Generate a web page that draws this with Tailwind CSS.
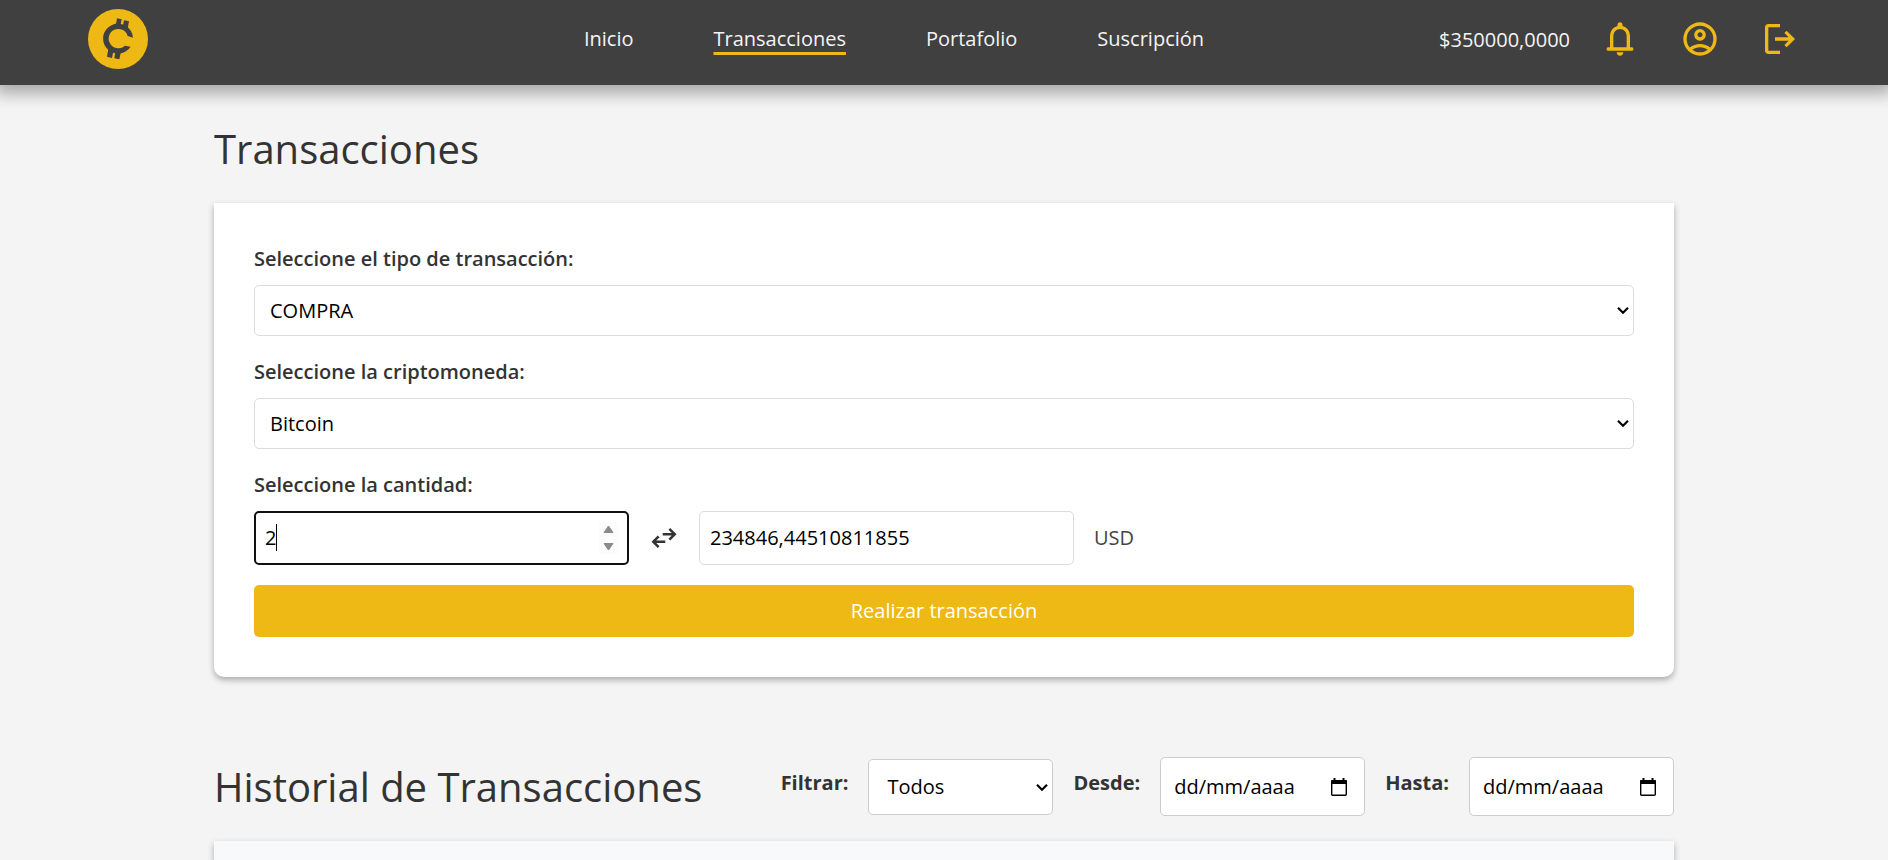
<!DOCTYPE html>
<html lang="es">
<head>
<meta charset="utf-8">
<meta name="viewport" content="width=device-width, initial-scale=1">
<title>Transacciones</title>
<script src="https://cdn.jsdelivr.net/npm/@tailwindcss/browser@4"></script>
</head>
<body class="flex min-h-screen flex-col overflow-x-hidden bg-[#f4f4f4] font-['Open_Sans',sans-serif] text-[20px] leading-[30px] text-[#333]">
<header class="relative z-10 flex items-center bg-[#404040] px-[88px] pt-[9px] pb-4 text-[#f4f4f4] shadow-[0_3px_16px_5px_rgba(0,0,0,0.33)]">
  <div class="flex flex-1">
    <a href="#" aria-label="Inicio">
      <svg class="size-[60px]" viewBox="0 0 180 180" aria-hidden="true">
        <circle cx="90" cy="90" r="90" fill="#efb915"/>
        <g fill="#404040">
          <path d="M135 86A45 45 0 1 0 128 113L111 110A29 29 0 1 1 119 81Z"/>
          <path d="M83 50L87 28L101 31L97 52ZM104 54L108 34L123 37L119 59ZM61 120L57 143L72 147L76 127ZM82 128L79 148L94 151L99 128Z"/>
        </g>
      </svg>
    </a>
  </div>
  <nav class="mr-[100px] flex gap-20 font-medium">
    <a href="#">Inicio</a>
    <a href="#" class="underline decoration-[#efb915] decoration-[3px] underline-offset-[6px]" aria-current="page">Transacciones</a>
    <a href="#">Portafolio</a>
    <a href="#">Suscripción</a>
  </nav>
  <div class="flex flex-1 items-center justify-end gap-10 text-[#efb915]">
    <span class="-mr-[10px] pt-[2px] font-medium text-[#f4f4f4]">$350000,0000</span>
    <button type="button" aria-label="Notificaciones">
      <svg class="size-10" viewBox="0 -960 960 960" fill="currentColor"><path d="M190-200q-17 0-23.500-11.500T160-240q0-17 6.500-28.500T190-280h50v-280q0-83 50-147.500T420-792v-28q0-25 17.500-42.500T480-880q25 0 42.500 17.500T540-820v28q80 20 130 84.500T720-560v280h50q17 0 23.500 11.500T800-240q0 17-6.500 28.500T770-200H190Zm290 120q-33 0-56.500-23.500T400-160h160q0 33-23.500 56.500T480-80ZM320-280h320v-280q0-66-47-113t-113-47q-66 0-113 47t-47 113v280Z"/></svg>
    </button>
    <button type="button" aria-label="Perfil">
      <svg class="size-10" viewBox="0 -960 960 960" fill="currentColor"><path d="M234-276q51-39 114-61.500T480-360q69 0 132 22.500T726-276q35-41 54.500-93T800-480q0-133-93.500-226.500T480-800q-133 0-226.500 93.500T160-480q0 59 19.500 111t54.500 93Zm246-164q-59 0-99.500-40.500T340-580q0-59 40.500-99.500T480-720q59 0 99.500 40.500T620-580q0 59-40.500 99.500T480-440Zm0 360q-83 0-156-31.500T197-197q-54-54-85.500-127T80-480q0-83 31.500-156T197-763q54-54 127-85.500T480-880q83 0 156 31.500T763-763q54 54 85.500 127T880-480q0 83-31.500 156T763-197q-54 54-127 85.500T480-80Zm0-80q53 0 100-15.500t86-44.500q-39-29-86-44.500T480-280q-53 0-100 15.500T294-220q39 29 86 44.500T480-160Zm0-360q26 0 43-17.500t17-42.500q0-25-17.500-42.500T480-640q-25 0-42.500 17.500T420-580q0 25 17.500 42.500T480-520Z"/></svg>
    </button>
    <button type="button" aria-label="Salir">
      <svg class="size-10" viewBox="0 -960 960 960" fill="currentColor"><path d="M200-120q-33 0-56.500-23.500T120-200v-560q0-33 23.500-56.500T200-840h280v80H200v560h280v80H200Zm440-160-55-58 102-102H360v-80h327L585-622l55-58 200 200-200 200Z"/></svg>
    </button>
  </div>
</header>

<main class="mx-auto flex w-full max-w-[1460px] flex-1 flex-col pt-10">
  <h1 class="mb-[30px] text-[40px] leading-[48px]">Transacciones</h1>

  <form class="flex flex-col gap-5 rounded-b-[10px] bg-white p-10 shadow-[0_3px_6px_rgba(0,0,0,0.3)]">
    <div class="flex flex-col gap-[10px]">
      <label for="tipo" class="leading-[32px] font-semibold">Seleccione el tipo de transacción:</label>
      <div class="relative">
        <select id="tipo" class="h-[51px] w-full appearance-none rounded-[5px] border border-[#dcdcdc] bg-white px-[15px] text-black"><option>COMPRA</option><option>VENTA</option></select>
        <svg class="pointer-events-none absolute top-[21px] right-[5px] h-[9px] w-3" viewBox="0 0 12 9" fill="none" stroke="#000" stroke-width="2.200" aria-hidden="true"><path d="M1 1.700L6 6.700L11 1.700"/></svg>
      </div>
    </div>
    <div class="flex flex-col gap-[10px]">
      <label for="cripto" class="leading-[32px] font-semibold">Seleccione la criptomoneda:</label>
      <div class="relative">
        <select id="cripto" class="h-[51px] w-full appearance-none rounded-[5px] border border-[#dcdcdc] bg-white px-[15px] text-black"><option>Bitcoin</option><option>Ethereum</option></select>
        <svg class="pointer-events-none absolute top-[21px] right-[5px] h-[9px] w-3" viewBox="0 0 12 9" fill="none" stroke="#000" stroke-width="2.200" aria-hidden="true"><path d="M1 1.700L6 6.700L11 1.700"/></svg>
      </div>
    </div>
    <div class="flex flex-col gap-[10px]">
      <label for="cantidad" class="leading-[32px] font-semibold">Seleccione la cantidad:</label>
      <div class="flex items-center gap-5">
        <div class="relative w-[375px]">
          <input id="cantidad" type="number" value="2" autofocus class="h-[54px] w-full appearance-none rounded-[5px] border-2 border-[#101010] bg-white px-[9px] pb-[2px] text-black caret-transparent outline-none [&::-webkit-inner-spin-button]:appearance-none">
          <span class="pointer-events-none absolute top-[13px] left-[22px] h-[27px] w-px bg-black"></span>
          <svg class="pointer-events-none absolute top-[11px] right-[11px] h-8 w-[19px] bg-[#fcfcfc]" viewBox="0 0 19 32" fill="#8b8b8b" stroke="#8b8b8b" stroke-linejoin="round" aria-hidden="true"><path d="M5 10.500L9.500 4L14 10.500ZM5 21.500H14L9.500 28Z"/></svg>
        </div>
        <svg class="size-[30px]" viewBox="0 -960 960 960" fill="#333" aria-hidden="true"><path d="M280-160 80-360l200-200 56 57-103 103h287v80H233l103 103-56 57Zm400-240-56-57 103-103H440v-80h287L624-743l56-57 200 200-200 200Z"/></svg>
        <input type="text" value="234846,44510811855" aria-label="Importe en USD" class="h-[54px] w-[375px] rounded-[5px] border border-[#dcdcdc] bg-white px-[10px] pb-[2px] text-black">
        <span class="text-[#444]">USD</span>
      </div>
    </div>
    <button type="button" class="h-[52px] rounded-[5px] bg-[#efb915] font-medium text-white">Realizar transacción</button>
  </form>

  <section class="mt-20 flex flex-1 flex-col">
    <div class="mb-[25px] flex items-center justify-between">
      <h2 class="text-[40px] leading-[48px]">Historial de Transacciones</h2>
      <div class="flex items-center gap-5">
        <label for="filtro" class="mb-2 font-bold">Filtrar:</label>
        <div class="relative w-[185px]">
          <select id="filtro" class="block h-[56px] w-full appearance-none rounded-[5px] border border-[#ccc] bg-white px-[18px] text-black"><option>Todos</option><option>Compra</option><option>Venta</option></select>
          <svg class="pointer-events-none absolute top-6 right-[5px] h-[9px] w-3" viewBox="0 0 12 9" fill="none" stroke="#000" stroke-width="2.200" aria-hidden="true"><path d="M1 1.700L6 6.700L11 1.700"/></svg>
        </div>
        <label for="desde" class="mb-2 font-bold">Desde:</label>
        <div class="flex h-[59px] w-[205px] items-center justify-between rounded-[5px] border border-[#ccc] bg-white pr-4 pl-[13px]">
          <input id="desde" type="text" placeholder="dd/mm/aaaa" class="w-[130px] text-black placeholder:text-black">
          <button type="button" aria-label="Abrir calendario"><svg class="size-[18px]" viewBox="0 0 18 18"><path d="M3.500 0h2v3h-2zM12.500 0h2v3h-2zM1 3a1 1 0 0 1 1-1h14a1 1 0 0 1 1 1v3H1z"/><rect x="1.700" y="2.700" width="14.600" height="14.600" rx="1" fill="none" stroke="#000" stroke-width="1.400"/></svg></button>
        </div>
        <label for="hasta" class="mb-2 font-bold">Hasta:</label>
        <div class="flex h-[59px] w-[205px] items-center justify-between rounded-[5px] border border-[#ccc] bg-white pr-4 pl-[13px]">
          <input id="hasta" type="text" placeholder="dd/mm/aaaa" class="w-[130px] text-black placeholder:text-black">
          <button type="button" aria-label="Abrir calendario"><svg class="size-[18px]" viewBox="0 0 18 18"><path d="M3.500 0h2v3h-2zM12.500 0h2v3h-2zM1 3a1 1 0 0 1 1-1h14a1 1 0 0 1 1 1v3H1z"/><rect x="1.700" y="2.700" width="14.600" height="14.600" rx="1" fill="none" stroke="#000" stroke-width="1.400"/></svg></button>
        </div>
      </div>
    </div>
    <div class="flex-1 bg-[#f8f9fb] shadow-[0_3px_6px_rgba(0,0,0,0.3)]"></div>
  </section>
</main>
</body>
</html>
